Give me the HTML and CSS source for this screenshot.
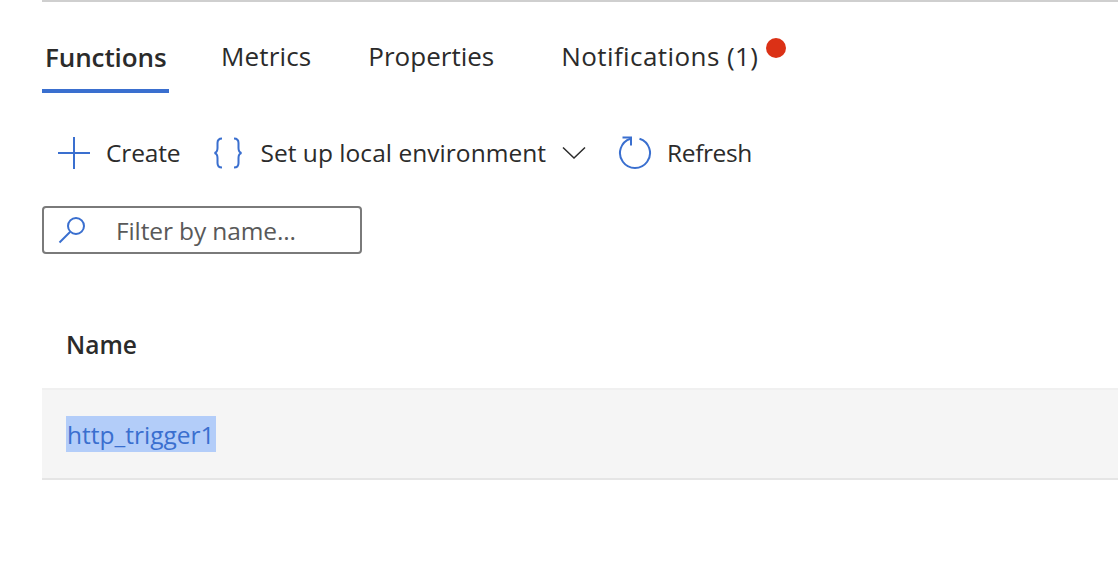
FILE: index.html
```html
<!DOCTYPE html>
<html lang="en">
<head>
<meta charset="utf-8">
<title>Functions</title>
<link rel="stylesheet" href="styles.css">
</head>
<body>
<main class="page">
  <nav class="tabs">
    <a class="tab tab-active tab-functions">Functions</a>
    <a class="tab tab-metrics">Metrics</a>
    <a class="tab tab-properties">Properties</a>
    <a class="tab tab-notifications">Notifications (1)<span class="dot"></span></a>
  </nav>
  <div class="toolbar">
    <button class="cmd cmd-create">
      <svg class="icon" width="32" height="32" viewBox="0 0 32 32"><path d="M0 16H32M16 0V32" fill="none" stroke="#3a6fcf" stroke-width="2"/></svg>
      <span class="cmd-label">Create</span>
    </button>
    <button class="cmd cmd-setup">
      <svg class="icon" width="30" height="32" viewBox="0 0 30 32"><path d="M9 1.500C6 1.500 4.500 3 4.500 6V11C4.500 14 4 15.500 1.500 16C4 16.500 4.500 18 4.500 21V26C4.500 29 6 30.500 9 30.500M21 1.500C24 1.500 25.500 3 25.500 6V11C25.500 14 26 15.500 28.500 16C26 16.500 25.500 18 25.500 21V26C25.500 29 24 30.500 21 30.500" fill="none" stroke="#3a6fcf" stroke-width="2"/></svg>
      <span class="cmd-label">Set up local environment</span>
      <svg class="chev" width="24" height="14" viewBox="0 0 24 14"><path d="M1 1.500L12 12L23 1.500" fill="none" stroke="#2b2b2b" stroke-width="1.500"/></svg>
    </button>
    <button class="cmd cmd-refresh">
      <svg class="icon" width="34" height="34" viewBox="0 0 34 34"><path d="M21.500 2.700A15 15 0 1 1 12.500 2.700" fill="none" stroke="#3a6fcf" stroke-width="2"/><path d="M4.500 1.500H13V9.500" fill="none" stroke="#3a6fcf" stroke-width="2"/></svg>
      <span class="cmd-label">Refresh</span>
    </button>
  </div>
  <div class="filter">
    <svg class="search" width="28" height="28" viewBox="0 0 28 28"><circle cx="18" cy="10" r="8" fill="none" stroke="#3a6fcf" stroke-width="2"/><path d="M12 16L1.500 26.500" fill="none" stroke="#3a6fcf" stroke-width="2"/></svg>
    <span class="placeholder">Filter by name...</span>
  </div>
  <div class="table">
    <div class="thead">Name</div>
    <div class="row"><a class="link">http_trigger1</a></div>
  </div>
</main>
</body>
</html>
```

FILE: styles.css
```css
* { box-sizing: border-box; }
html, body { margin: 0; padding: 0; background: #fff; overflow: hidden; }
body { height: 588px; font-family: "Open Sans", "Noto Sans", sans-serif; color: #2b2b2b; font-size: 24.5px; }
.page { margin-left: 42px; border-top: 2px solid #cfcfcf; }
.tabs { display: flex; height: 91px; font-size: 26px; }
.tab { display: block; line-height: 38px; padding-top: 35px; height: 91px; white-space: nowrap; }
.tab-active { font-weight: 600; border-bottom: 4px solid #3a6fcf; padding-top: 36px; }
.tab-functions { width: 127px; padding-left: 3px; letter-spacing: -0.1px; }
.tab-metrics { margin-left: 52px; letter-spacing: 0.15px; }
.tab-properties { margin-left: 57px; }
.tab-notifications { margin-left: 67px; display: flex; align-items: flex-start; letter-spacing: 0.42px; }
.dot { width: 20px; height: 20px; border-radius: 50%; background: #db3116; margin: 1px 0 0 8px; }
.toolbar { display: flex; align-items: center; height: 64px; margin-top: 28px; padding-left: 16px; }
.cmd { display: flex; align-items: center; border: 0; background: none; padding: 0; font: inherit; color: inherit; white-space: nowrap; }
.cmd-label { padding-bottom: 2px; }
.cmd-create .cmd-label { letter-spacing: -0.15px; }
.cmd-create .icon { margin-right: 16px; }
.cmd-setup { margin-left: 33px; }
.cmd-setup .icon { margin-right: 17px; }
.cmd-setup .cmd-label { letter-spacing: 0.04px; }
.chev { margin-left: 16px; }
.cmd-refresh { margin-left: 32px; }
.cmd-refresh .icon { margin-right: 15px; }
.cmd-refresh .cmd-label { letter-spacing: -0.4px; }
.filter { display: flex; align-items: center; width: 320px; height: 48px; margin-top: 21px; border: 2px solid #7a7a7a; border-radius: 4px; padding-left: 14px; }
.search { flex: none; }
.placeholder { margin-left: 30px; color: #595959; letter-spacing: -0.12px; }
.table { margin-top: 68px; }
.thead { height: 66px; padding-left: 24px; line-height: 46px; font-weight: 600; }
.row { display: flex; align-items: center; height: 92px; background: #f5f5f5; border-top: 2px solid #f0f0f0; border-bottom: 2px solid #e5e5e5; padding-left: 24px; }
.link { background: #b3cdf9; color: #3a6fcf; line-height: 35px; padding: 1px 1px 0; }
```
